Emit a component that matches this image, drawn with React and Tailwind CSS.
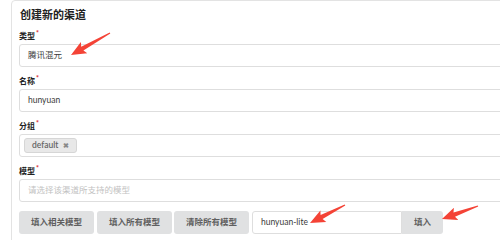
import React from 'react';

const font = "font-['Lato','Noto_Sans_CJK_SC',sans-serif]";

function Arrow({ tail, tip }) {
    const [tx, ty] = tail;
    const [px, py] = tip;
    const len = Math.hypot(px - tx, py - ty);
    const dx = (px - tx) / len;
    const dy = (py - ty) / len;
    const nx = -dy;
    const ny = dx;
    const head = 13;
    const bx = px - dx * head;
    const by = py - dy * head;
    const wx = px - dx * (head + 2);
    const wy = py - dy * (head + 2);
    const pts = [
        [tx + nx * 0.6, ty + ny * 0.6],
        [bx + nx * 2.2, by + ny * 2.2],
        [wx + nx * 6.5, wy + ny * 6.5],
        [px, py],
        [wx - nx * 6.5, wy - ny * 6.5],
        [bx - nx * 2.2, by - ny * 2.2],
        [tx - nx * 0.6, ty - ny * 0.6],
    ];
    return (
        <polygon
            points={pts.map(p => `${p[0].toFixed(1)},${p[1].toFixed(1)}`).join(' ')}
            fill="#f44336"
        />
    );
}

function Label({ children }) {
    return (
        <div className="h-[10px] mb-[3px] text-[8px] leading-[10px] font-bold text-[#212121] flex items-start">
            {children}
            <span className="text-[#db2828] text-[7px] leading-[7px] ml-[1px] -mt-[1px]">*</span>
        </div>
    );
}

function Field({ label, children }) {
    return (
        <div className="mb-[9px]">
            <Label>{label}</Label>
            {children}
        </div>
    );
}

function TextBox({ children, muted }) {
    return (
        <div className={`h-[23px] border border-[#dedede] rounded-[3px] pl-[8px] flex items-center text-[8.5px] ${muted ? 'text-[#c2c2c2]' : 'text-[#3a3a3a]'}`}>
            {children}
        </div>
    );
}

function GrayButton({ children, className = '' }) {
    return (
        <div className={`h-[23px] bg-[#e0e1e2] text-[#5f5f5f] text-[8.5px] font-bold flex items-center justify-center ${className}`}>
            {children}
        </div>
    );
}

export default function App() {
    return (
        <div className={`relative w-[500px] h-[240px] overflow-hidden bg-white ${font}`}>
            <div className="ml-[11px] w-[700px] border border-[#e3e3e3] rounded-[4px] pl-[7px] pt-[6px]">
                <div className="h-[16px] text-[11px] leading-[16px] font-semibold text-[#212121] mb-[8px] ml-[1px]">
                    创建新的渠道
                </div>

                <Field label="类型">
                    <TextBox>腾讯混元</TextBox>
                </Field>

                <Field label="名称">
                    <TextBox>hunyuan</TextBox>
                </Field>

                <Field label="分组">
                    <div className="h-[23px] border border-[#dedede] rounded-[3px] pl-[4px] flex items-center">
                        <div className="h-[15px] px-[7px] bg-[#e8e8e8] border border-[#d6d6d6] rounded-[3px] flex items-center gap-[5px] text-[8.5px] font-semibold text-[#666666]">
                            default
                            <span className="text-[7px] text-[#8a8a8a]">✖</span>
                        </div>
                    </div>
                </Field>

                <Field label="模型">
                    <TextBox muted>请选择该渠道所支持的模型</TextBox>
                </Field>

                <div className="flex items-center">
                    <GrayButton className="w-[75px] rounded-[3px]">填入相关模型</GrayButton>
                    <GrayButton className="w-[75px] rounded-[3px] ml-[3px]">填入所有模型</GrayButton>
                    <GrayButton className="w-[75px] rounded-[3px] ml-[2px]">清除所有模型</GrayButton>
                    <div className="ml-[3px] w-[150px] h-[23px] border border-[#dedede] rounded-l-[3px] pl-[8px] flex items-center text-[8.5px] text-[#3a3a3a]">
                        hunyuan-lite
                    </div>
                    <GrayButton className="w-[41px] rounded-r-[3px]">填入</GrayButton>
                </div>
                <div className="h-[10px]" />
            </div>

            <svg className="absolute inset-0 pointer-events-none" width="500" height="240" viewBox="0 0 500 240">
                <Arrow tail={[110, 33]} tip={[71, 55]} />
                <Arrow tail={[345, 205]} tip={[310, 223]} />
                <Arrow tail={[478, 206]} tip={[442, 219]} />
            </svg>
        </div>
    );
}
